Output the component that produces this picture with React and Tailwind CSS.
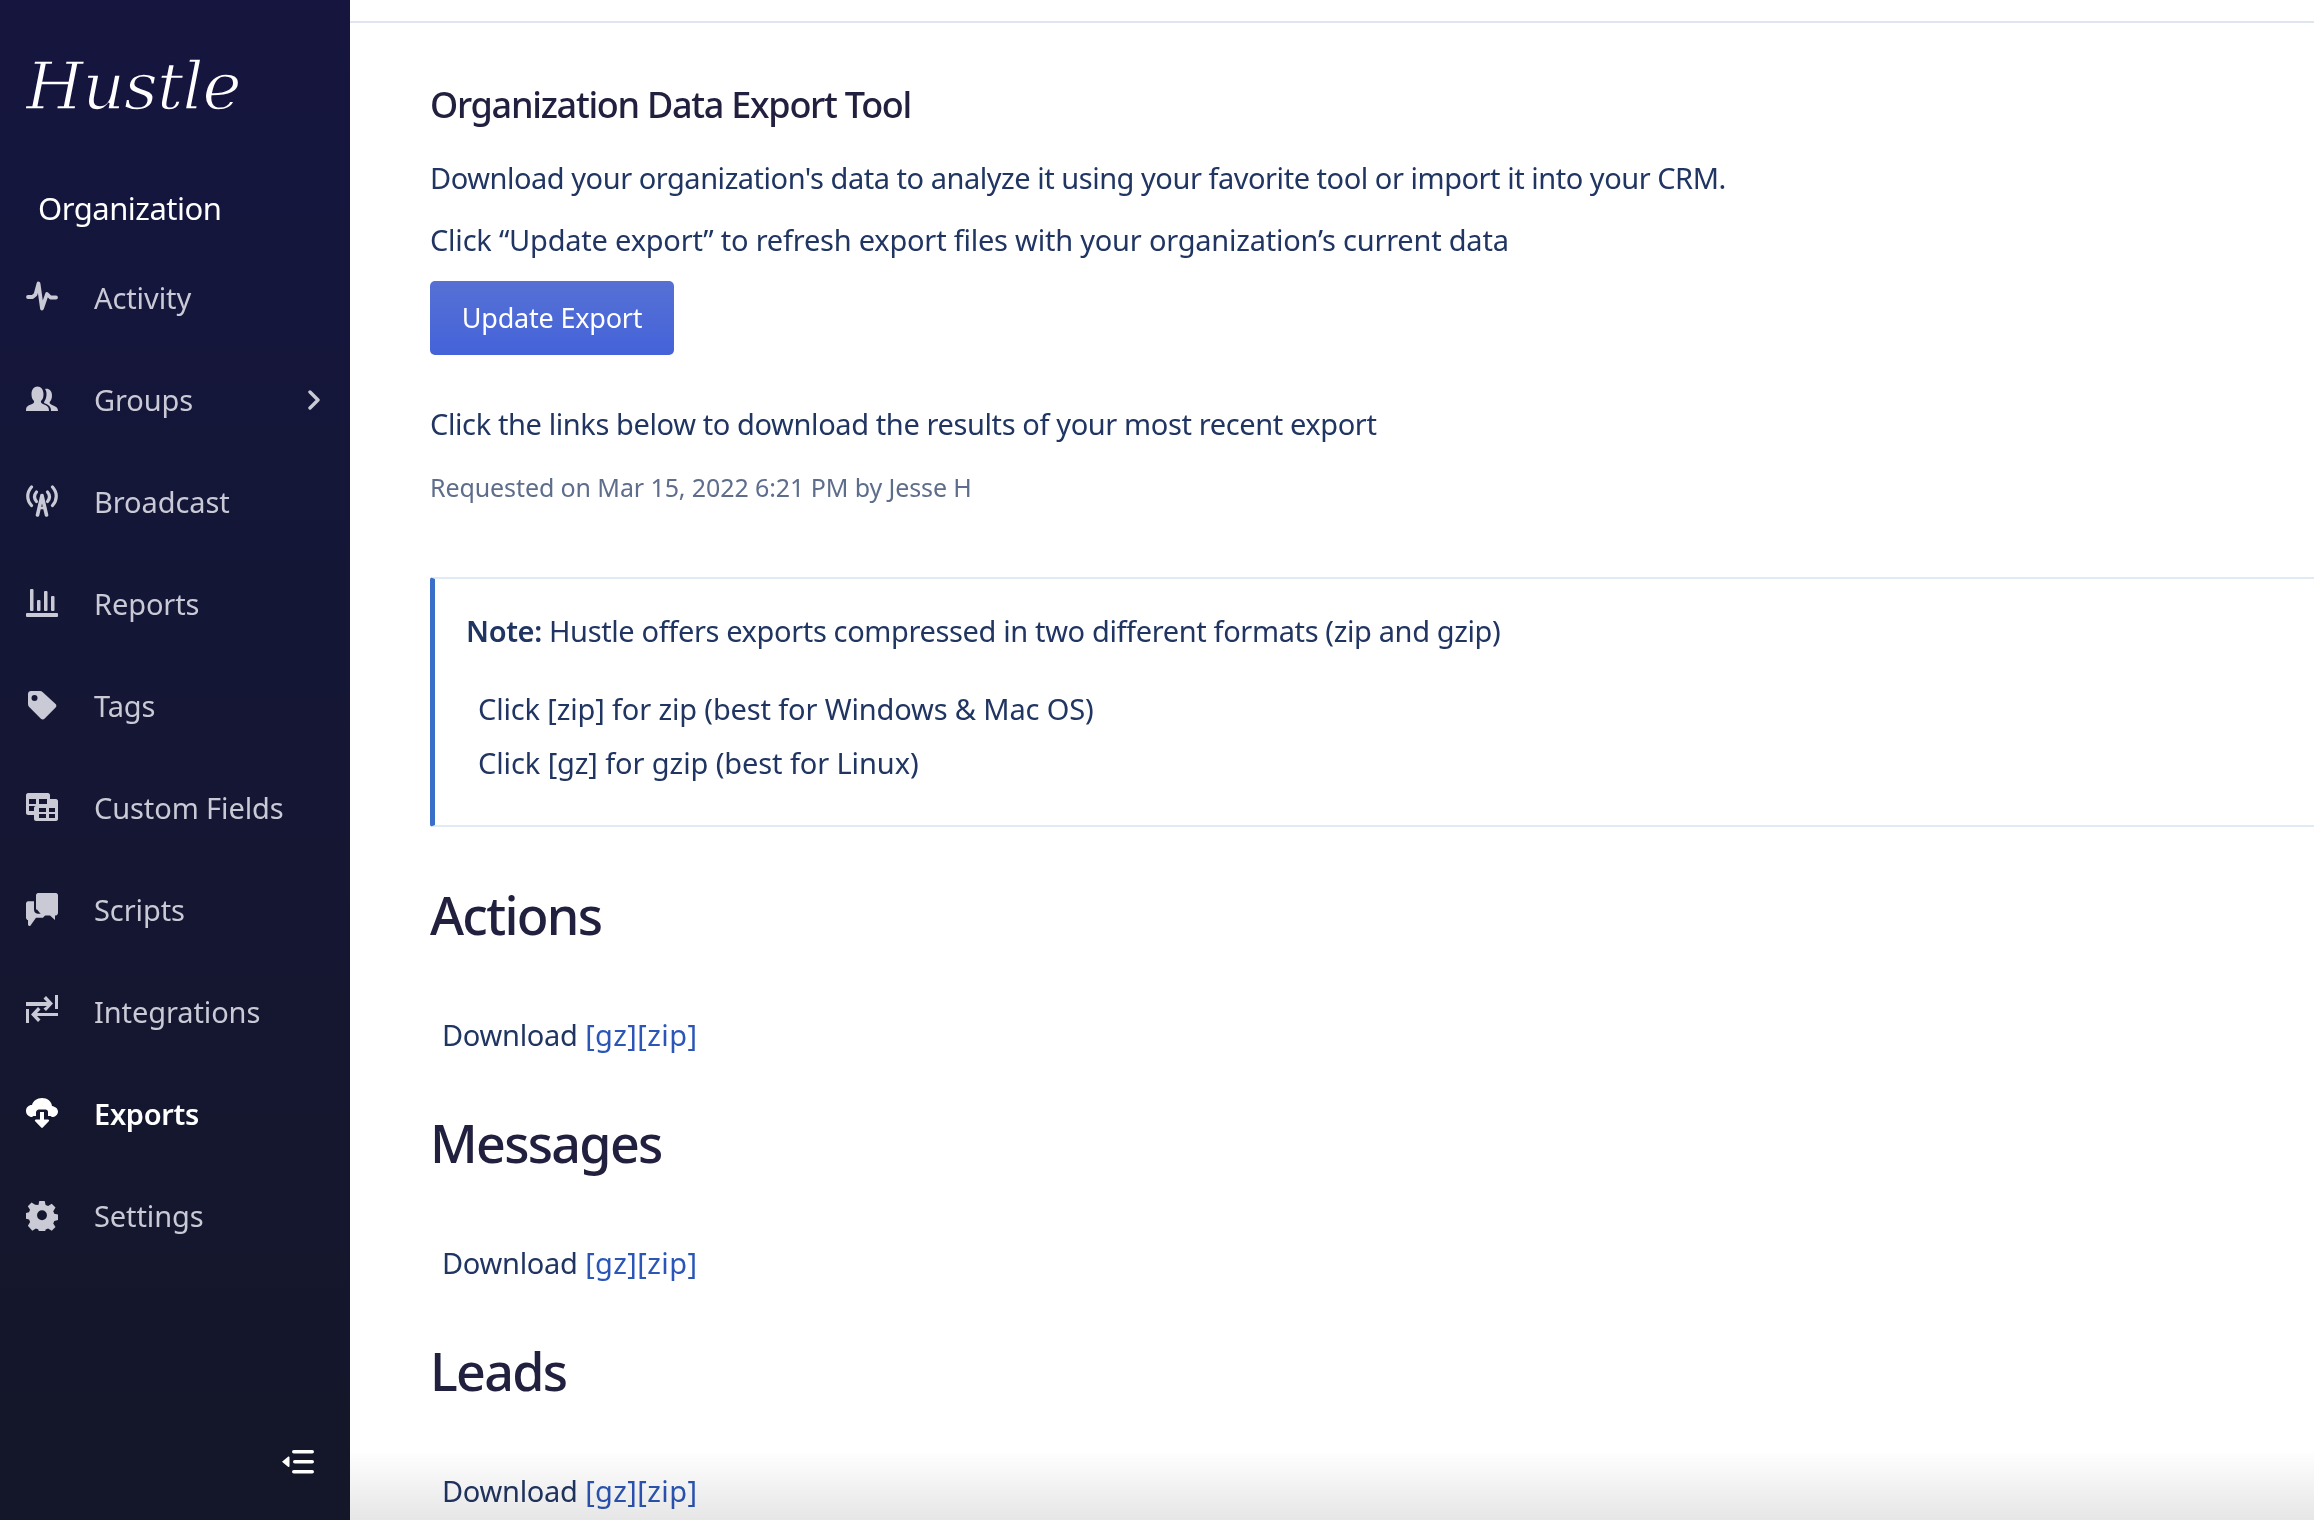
const PulseIcon = () => (
  <svg viewBox="0 0 32 32" className="size-8" fill="none" stroke="currentColor" strokeWidth="3.8" strokeLinecap="round" strokeLinejoin="round">
    <path d="M2 16H6.500l3-2.500 3-11 3.500 25 5-14.500 3.500 3.500h5.500" />
  </svg>
);

const PeopleIcon = () => (
  <svg viewBox="0 0 32 32" className="size-8" fill="currentColor">
    <path d="M0 28c0-4 1-5 5-6.500 2.500-1 3.500-2 3-3.500-2-2-2.500-4-2.500-7C5.500 6.500 8 3.500 11.500 3.500S17.500 6.500 17.500 11c0 3-.5 5-2.500 7-.5 1.500.5 2.500 3 3.500 3.500 1.500 5 2.500 5 6.500z" />
    <path d="M19 6c3.500-1 7 1.500 7 6.500 0 3-.8 5-2.300 6.500-.4 1.500.6 2.200 3 3.200 3 1.200 5.300 2.300 5.300 5.800h-7c0-4-2-6-6-7.500-.8-.4-1.200-1-.8-1.800 1.500-2 2.300-4.500 2.300-7.700 0-2-.5-3.700-1.500-5z" />
  </svg>
);

const AntennaIcon = () => (
  <svg viewBox="0 0 32 32" className="size-8" fill="none" stroke="currentColor" strokeWidth="3.2" strokeLinecap="round" strokeLinejoin="round">
    <path d="M5.500 2C.5 7.500.5 15 5.500 20.500M26.500 2c5 5.500 5 13 0 18.500" />
    <path d="M10.500 7c-2.500 3-2.500 6.500 0 9.500M21.500 7c2.500 3 2.500 6.500 0 9.500" />
    <path d="M16 10.500 11.500 30M16 10.500 20.500 30" strokeWidth="3.600" />
    <path d="M13 23h6" strokeWidth="2.500" />
  </svg>
);

const ChartIcon = () => (
  <svg viewBox="0 0 32 32" className="size-8" fill="currentColor">
    <rect x="0" y="26" width="32" height="4" rx="1" />
    <rect x="4" y="2" width="3.500" height="22" rx="1" />
    <rect x="11" y="13" width="3.500" height="11" rx="1" />
    <rect x="18" y="4" width="3.500" height="20" rx="1" />
    <rect x="25" y="9" width="3.500" height="15" rx="1" />
  </svg>
);

const TagIcon = () => (
  <svg viewBox="0 0 32 32" className="size-8" fill="currentColor">
    <path fillRule="evenodd" d="M5 2h9c1 0 2 .4 2.800 1.200L29.600 15c1 1 1 2.600 0 3.600L18.500 29.800c-1 1-2.600 1-3.600 0L3.200 18C2.400 17.200 2 16.200 2 15V5c0-1.700 1.300-3 3-3zm3.500 4a3 3 0 1 0 0 6 3 3 0 0 0 0-6z" />
  </svg>
);

const TableIcon = () => (
  <svg viewBox="0 0 32 32" className="size-8" fill="currentColor">
    <path fillRule="evenodd" d="M2 2h20c1 0 2 1 2 2v4h6c1 0 2 1 2 2v18c0 1-1 2-2 2H10c-1 0-2-1-2-2v-4H2c-1 0-2-1-2-2V4c0-1 1-2 2-2zm1 6v5h7V8zm10 0v5h8V8zM3 15v5h5v-3c0-1 .5-2 2-2zm10 2v4h7v-4zm10 0v4h6v-4zm-10 6v4h7v-4zm10 0v4h6v-4z" />
  </svg>
);

const ChatIcon = () => (
  <svg viewBox="0 0 32 28" preserveAspectRatio="none" className="w-8 h-[33px]" fill="currentColor">
    <path d="M12 0h18c1 0 2 1 2 2v15c0 1-1 2-2 2h-1v4l-5-4h-8l-5-5h-1V2c0-1 1-2 2-2z" />
    <path d="M2 7h6v7c0 2 1.500 3.500 3.500 3.500h9L17 21H10l-5.500 6.500C4 28.500 2 28 2 26.500V23c-1 0-2-1-2-2V9c0-1 1-2 2-2z" />
  </svg>
);

const ExchangeIcon = () => (
  <svg viewBox="0 0 32 32" className="size-8" fill="currentColor">
    <path d="M0 7h21l-3.500-3.500L20 1l7 7.500-7 7.500-2.500-2.500L21 11H0zM29 0h3v14h-3z" />
    <path d="M32 21H11l3.500 3.500L12 27l-7-7.500L12 12l2.500 2.500L11 18h21l0 3zM0 14h3v14H0z" />
  </svg>
);

const CloudDownloadIcon = () => (
  <svg viewBox="0 0 32 32" className="size-8" fill="currentColor">
    <path d="M8 19c-.5 0-1.500.5-2 1-3 0-6-2.500-6-6s2.500-6 6-6c1-4 5-7 10-7 5.500 0 9.500 3.500 10 8 3 .5 6 2.500 6 5.500 0 3.500-3 5.500-6 5.500-.5-.5-1.500-1-2-1h-2v-4c0-1.500-1-2.500-2.500-2.500h-7C11 13 10 14 10 15.500V19z" />
    <path d="M14 15h4v7.500h4c1 0 1.500 1 .8 1.800L16.800 30.500c-.4.500-1.200.500-1.600 0L9.200 24.300c-.7-.8-.2-1.800.8-1.800h4z" />
  </svg>
);

const CogIcon = () => (
  <svg viewBox="0 0 32 32" className="size-8" fill="currentColor">
    <path fillRule="evenodd" d="M13 0h6l1 4.500 2.800 1.200 4-2.500 4.200 4.200-2.500 4 1.200 2.800 4.500 1v6l-4.500 1-1.200 2.800 2.500 4-4.200 4.200-4-2.500-2.800 1.200-1 4.500h-6l-1-4.500-2.800-1.200-4 2.500L.3 27.500l2.500-4L1.600 20.700-3 19.700v-6l4.500-1 1.200-2.800-2.500-4 4.200-4.200 4 2.500L12 4.500zM16 10.500a5.500 5.500 0 1 0 0 11 5.500 5.500 0 0 0 0-11z" transform="translate(1.600 1.900) scale(.9)" />
  </svg>
);

const CollapseIcon = () => (
  <svg viewBox="0 0 32 24" className="w-8 h-6" fill="currentColor">
    <rect x="10" y="0" width="22" height="3.600" rx="1.800" />
    <rect x="11" y="10" width="21" height="3.600" rx="1.800" />
    <rect x="10" y="20" width="22" height="3.600" rx="1.800" />
    <path d="M0 11.800 6 6.800c.6-.5 1.500-.1 1.500.7v8.600c0 .8-.9 1.200-1.500.7z" />
  </svg>
);

const ChevronIcon = () => (
  <svg viewBox="0 0 12 20" className="w-3 h-5 text-[#c9cad6]" fill="none" stroke="currentColor" strokeWidth="3.400" strokeLinecap="round" strokeLinejoin="round">
    <path d="M2 2l8 8-8 8" />
  </svg>
);

const navItems = [
  { label: "Activity", icon: <PulseIcon /> },
  { label: "Groups", icon: <PeopleIcon />, chevron: true },
  { label: "Broadcast", icon: <AntennaIcon /> },
  { label: "Reports", icon: <ChartIcon /> },
  { label: "Tags", icon: <TagIcon /> },
  { label: "Custom Fields", icon: <TableIcon /> },
  { label: "Scripts", icon: <ChatIcon /> },
  { label: "Integrations", icon: <ExchangeIcon /> },
  { label: "Exports", icon: <CloudDownloadIcon />, active: true },
  { label: "Settings", icon: <CogIcon /> },
];

function NavItem({ label, icon, chevron, active }) {
  return (
    <div className={`flex items-center h-[102px] pl-[26px] pr-[30px] text-[29px] ${active ? "text-white font-semibold tracking-[-0.3px]" : "text-[#c9cad6] tracking-[-0.1px]"}`}>
      <span className="w-8 flex justify-center shrink-0 -mt-[2px]">{icon}</span>
      <span className="ml-[36px] flex-1">{label}</span>
      {chevron && <ChevronIcon />}
    </div>
  );
}

function Sidebar() {
  return (
    <aside className="relative w-[350px] shrink-0 h-[1520px] bg-gradient-to-b from-[#15153f] to-[#141729]">
      <div className="pl-[26px] pt-[43px] h-[172px] text-white text-[66px] leading-[88px] italic font-['DejaVu_Serif',serif] tracking-[-1px] [-webkit-text-stroke:1.5px_#15153f]">
        Hustle
      </div>
      <div className="pl-[38px] h-[73px] text-white text-[31px] leading-[72px] tracking-[-0.5px]">Organization</div>
      <nav className="mt-[2px]">
        {navItems.map((item) => (
          <NavItem key={item.label} {...item} />
        ))}
      </nav>
      <div className="absolute left-[282px] top-[1450px] text-white">
        <CollapseIcon />
      </div>
    </aside>
  );
}

function Section({ title }) {
  return (
    <section>
      <h2 className="text-[52px] leading-[60px] font-medium text-[#22203f] tracking-[-1.7px]">{title}</h2>
      <p className="mt-[70px] pl-[12px] text-[29px] leading-[40px] text-[#203562]">
        <span className="tracking-[-0.3px]">Download</span> <span className="text-[#2b56b8] tracking-[0.4px]">[gz][zip]</span>
      </p>
    </section>
  );
}

export default function App() {
  return (
    <div className="relative flex w-[2314px] h-[1520px] overflow-hidden bg-white font-['Noto_Sans',sans-serif]">
      <Sidebar />
      <main className="flex-1 min-w-0">
        <div className="h-[23px] border-b-[2px] border-[#e0e6f0]" />
        <div className="pl-[80px] pt-[58px]">
          <h1 className="text-[36px] leading-[48px] font-medium text-[#22203f] tracking-[-1.27px]">Organization Data Export Tool</h1>
          <p className="mt-[29px] text-[29px] leading-[40px] text-[#203562] tracking-[-0.47px]">
            Download your organization's data to analyze it using your favorite tool or import it into your CRM.
          </p>
          <p className="mt-[22px] text-[29px] leading-[40px] text-[#203562] tracking-[-0.22px]">
            Click “Update export” to refresh export files with your organization’s current data
          </p>
          <button className="mt-[21px] block w-[244px] h-[74px] rounded-[5px] bg-gradient-to-b from-[#5670d4] to-[#4463d9] text-white text-[27px] tracking-[-0.2px]">
            Update Export
          </button>
          <p className="mt-[49px] text-[29px] leading-[40px] text-[#203562] tracking-[-0.39px]">
            Click the links below to download the results of your most recent export
          </p>
          <p className="mt-[25px] text-[25px] leading-[36px] text-[#5e6d8c] tracking-[-0.1px]">Requested on Mar 15, 2022 6:21 PM by Jesse H</p>
          <div className="mt-[72px] w-[2100px] h-[250px] border-y-[2px] border-[#e1ebf5] border-l-[5px] border-l-[#3a6fc9] rounded-l-[3px] pl-[31px] pt-[32px] text-[29px] leading-[40px] text-[#203562]">
            <p className="tracking-[-0.37px]">
              <strong className="font-semibold">Note:</strong> Hustle offers exports compressed in two different formats (zip and gzip)
            </p>
            <p className="mt-[38px] pl-[12px] tracking-[-0.15px]">Click [zip] for zip (best for Windows &amp; Mac OS)</p>
            <p className="mt-[14px] pl-[12px] tracking-[-0.1px]">Click [gz] for gzip (best for Linux)</p>
          </div>
          <div className="mt-[58px] flex flex-col gap-[58px]">
            <Section title="Actions" />
            <Section title="Messages" />
            <Section title="Leads" />
          </div>
        </div>
      </main>
      <div className="absolute left-[350px] right-0 bottom-0 h-[70px] bg-gradient-to-b from-transparent to-[#e6e6e6] mix-blend-multiply" />
    </div>
  );
}
